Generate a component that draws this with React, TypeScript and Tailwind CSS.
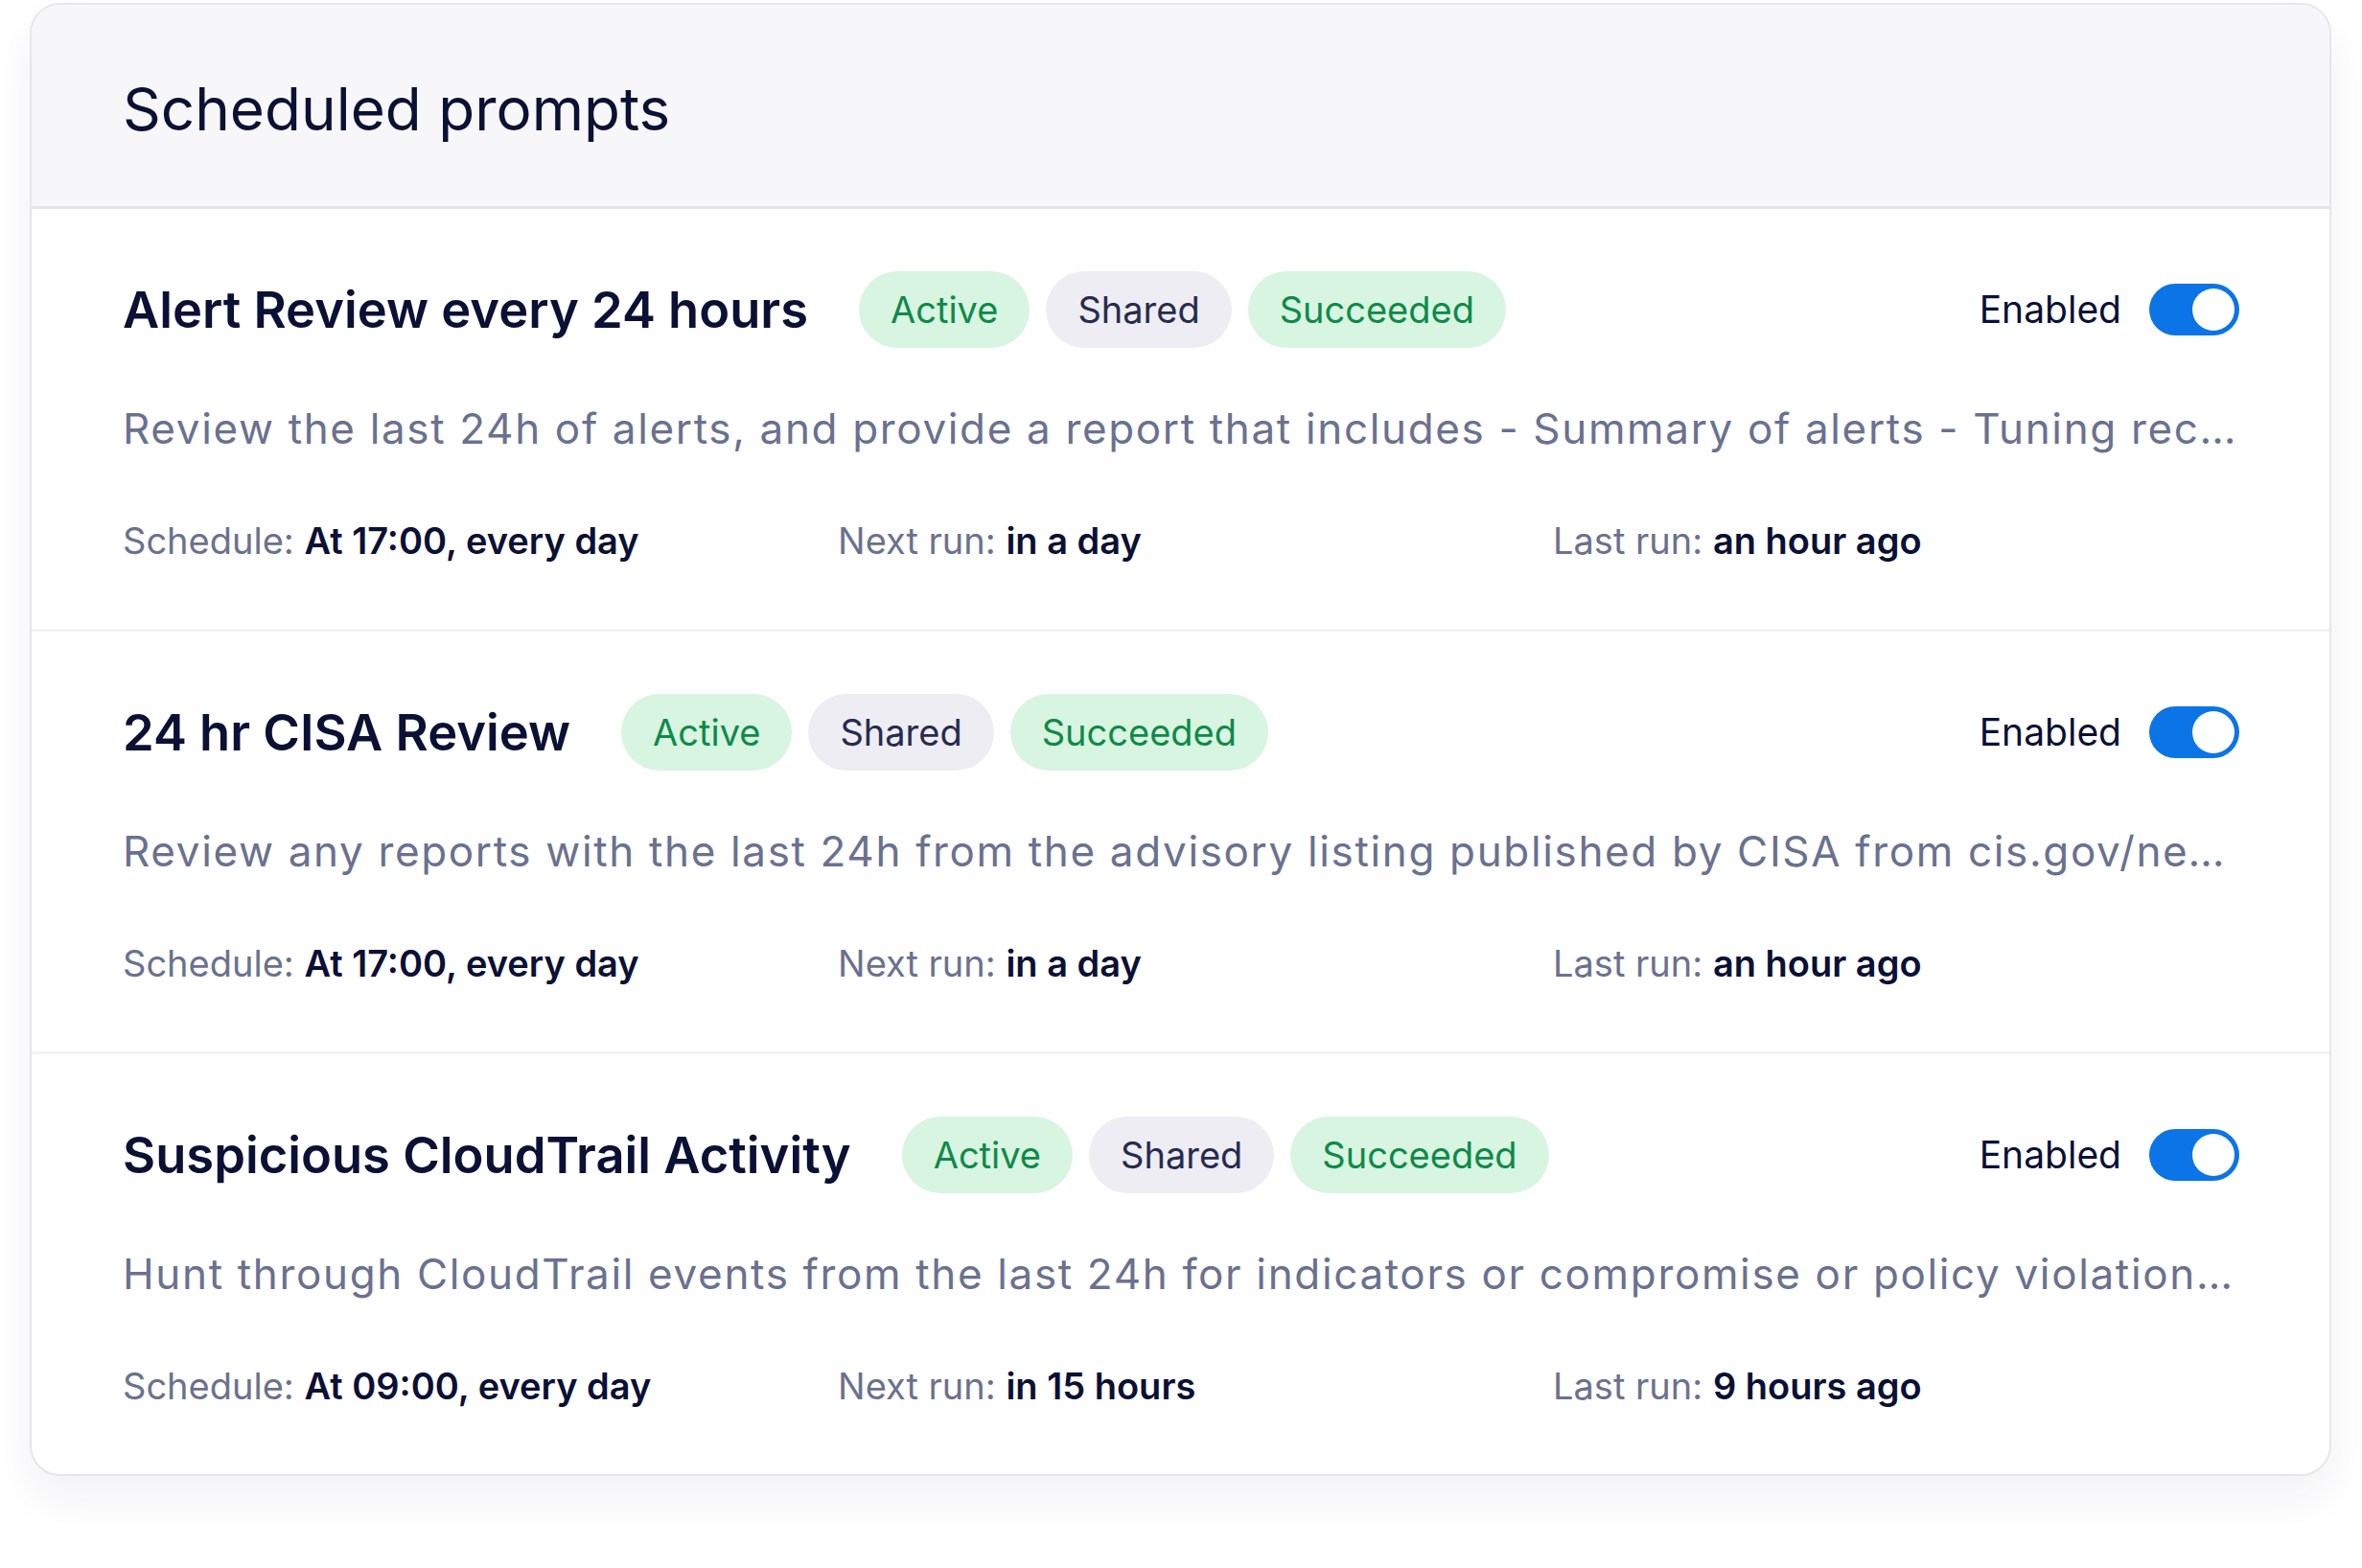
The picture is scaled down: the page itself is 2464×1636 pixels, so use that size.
type Prompt = {
  title: string;
  description: string;
  schedule: string;
  nextRun: string;
  lastRun: string;
};

const prompts: Prompt[] = [
  {
    title: "Alert Review every 24 hours",
    description:
      "Review the last 24h of alerts, and provide a report that includes - Summary of alerts - Tuning recommendations - Notable trends",
    schedule: "At 17:00, every day",
    nextRun: "in a day",
    lastRun: "an hour ago",
  },
  {
    title: "24 hr CISA Review",
    description:
      "Review any reports with the last 24h from the advisory listing published by CISA from cis.gov/news-events/cybersecurity-advisories",
    schedule: "At 17:00, every day",
    nextRun: "in a day",
    lastRun: "an hour ago",
  },
  {
    title: "Suspicious CloudTrail Activity",
    description:
      "Hunt through CloudTrail events from the last 24h for indicators or compromise or policy violations across all accounts",
    schedule: "At 09:00, every day",
    nextRun: "in 15 hours",
    lastRun: "9 hours ago",
  },
];

function Toggle() {
  return (
    <div className="flex h-[54px] w-[94px] items-center justify-end rounded-full bg-[#0b74e6] pr-[5px]">
      <div className="h-[44px] w-[44px] rounded-full bg-white" />
    </div>
  );
}

function Badge({ label, tone }: { label: string; tone: "green" | "gray" }) {
  const styles =
    tone === "green"
      ? "bg-[#d8f5e2] text-[#0e8a48]"
      : "bg-[#ededf3] text-[#272b4f]";
  return (
    <span
      className={`flex h-[80px] items-center rounded-full px-[33px] text-[38px] leading-none ${styles}`}
    >
      {label}
    </span>
  );
}

function Meta({ label, value }: { label: string; value: string }) {
  return (
    <div className="w-[746px] shrink-0 text-[38px] leading-[57px]">
      <span className="text-[#6b718e]">{label}: </span>
      <span className="font-semibold text-[#0b1035]">{value}</span>
    </div>
  );
}

function PromptRow({ p, last }: { p: Prompt; last: boolean }) {
  return (
    <div
      className={`pl-[95px] pr-[94px] pt-[65px] pb-[63px] ${last ? "" : "border-b-[3px] border-[#f3f3f6]"}`}
    >
      <div className="flex h-[80px] items-center">
        <h3 className="mr-[53px] text-[52.5px] font-semibold leading-none text-[#0b1035]">
          {p.title}
        </h3>
        <div className="flex gap-[17px]">
          <Badge label="Active" tone="green" />
          <Badge label="Shared" tone="gray" />
          <Badge label="Succeeded" tone="green" />
        </div>
        <div className="ml-auto flex items-center gap-[29px]">
          <span className="text-[39px] text-[#0b1035]">Enabled</span>
          <Toggle />
        </div>
      </div>
      <p className="mt-[51px] truncate text-[44px] leading-[66px] tracking-[1.65px] text-[#6a7190]">
        {p.description}
      </p>
      <div className="mt-[56px] flex">
        <Meta label="Schedule" value={p.schedule} />
        <Meta label="Next run" value={p.nextRun} />
        <Meta label="Last run" value={p.lastRun} />
      </div>
    </div>
  );
}

export default function App() {
  return (
    <div
      className="min-h-[1636px] bg-white pl-[31px] pt-[3px]"
      style={{ fontFamily: "Inter, 'Noto Sans', sans-serif" }}
    >
      <div className="w-[2401px] overflow-hidden rounded-[32px] border-2 border-[#e6e6ec] bg-white shadow-[0_24px_50px_rgba(30,30,80,0.06)]">
        <div className="flex h-[213px] items-center border-b-[3px] border-[#e4e4ea] bg-[#f7f7fa] px-[95px] pt-[6px]">
          <h2 className="text-[62px] font-normal text-[#0b1035]">Scheduled prompts</h2>
        </div>
        {prompts.map((p, i) => (
          <PromptRow key={p.title} p={p} last={i === prompts.length - 1} />
        ))}
      </div>
    </div>
  );
}
